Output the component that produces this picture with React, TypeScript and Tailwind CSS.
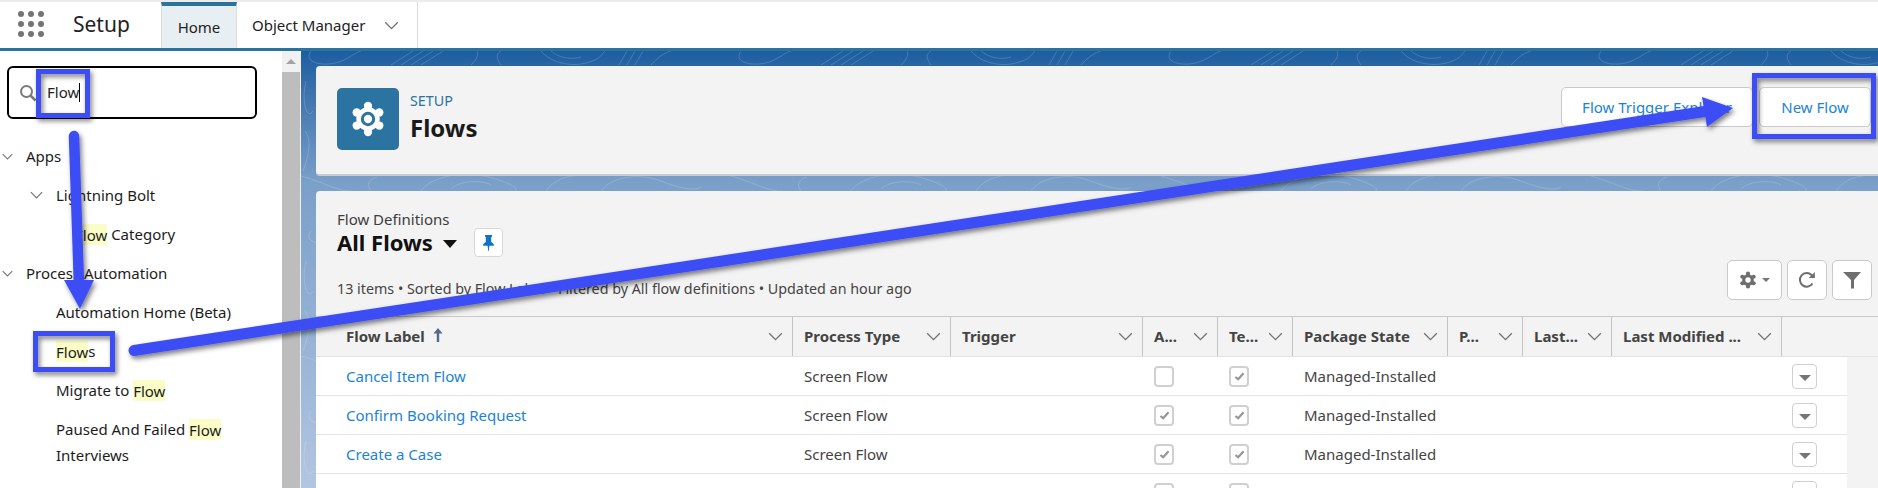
import { ReactNode } from "react"

const columns = [
  { label: "Flow Label", width: "w-[477px]", pad: "pl-[30px]" },
  { label: "Process Type", width: "w-[158px]", pad: "pl-[11px]" },
  { label: "Trigger", width: "w-[192px]", pad: "pl-[11px]" },
  { label: "A...", width: "w-[75px]", pad: "pl-[11px]" },
  { label: "Te...", width: "w-[75px]", pad: "pl-[11px]" },
  { label: "Package State", width: "w-[155px]", pad: "pl-[11px]" },
  { label: "P...", width: "w-[75px]", pad: "pl-[11px]" },
  { label: "Last...", width: "w-[89px]", pad: "pl-[11px]" },
  { label: "Last Modified ...", width: "w-[170px]", pad: "pl-[11px]" },
]

const rows = [
  { name: "Cancel Item Flow", type: "Screen Flow", trigger: "", active: false },
  { name: "Confirm Booking Request", type: "Screen Flow", trigger: "", active: true },
  { name: "Create a Case", type: "Screen Flow", trigger: "", active: true },
  { name: "Automated Reservation Check", type: "Autolaunched Flow", trigger: "Record—Run After Save", active: true },
]

function Chevron({ className = "" }: { className?: string }) {
  return (
    <svg viewBox="0 0 16 10" className={className} fill="none" stroke="#747474" strokeWidth="1.5">
      <path d="M1 1.5l7 7 7-7" />
    </svg>
  )
}

function Gear({ color, hole, ring }: { color: string; hole: string; ring?: string }) {
  const angles = [0, 60, 120, 180, 240, 300]
  return (
    <svg viewBox="0 0 40 40" className="w-full h-full">
      <circle cx="20" cy="20" r="13" fill={color} />
      {angles.map((a) => (
        <circle
          key={a}
          cx={20 + 14.5 * Math.sin((a * Math.PI) / 180)}
          cy={20 - 14.5 * Math.cos((a * Math.PI) / 180)}
          r="4.6"
          fill={color}
        />
      ))}
      {ring && <circle cx="20" cy="20" r="8" fill={ring} />}
      <circle cx="20" cy="20" r={ring ? 4.6 : 6} fill={hole} />
    </svg>
  )
}

function NavItem({ children, className = "" }: { children: ReactNode; className?: string }) {
  return <div className={`text-[15px] leading-[26px] text-[#1c1c1c] ${className}`}>{children}</div>
}

function Mark({ children }: { children: ReactNode }) {
  return <span className="bg-[#fbfdc6] py-[0.5px]">{children}</span>
}

function Check({ on }: { on: boolean }) {
  return (
    <div className="w-[20px] h-[21px] rounded-[4px] border-2 border-[#d0d0d0] bg-white flex items-center justify-center">
      {on && (
        <svg viewBox="0 0 12 10" className="w-[11px] h-[9px]" fill="none" stroke="#969696" strokeWidth="2.4">
          <path d="M1.5 5.5l3 2.6 6-6.6" />
        </svg>
      )}
    </div>
  )
}

function ToolButton({ children, className = "" }: { children: ReactNode; className?: string }) {
  return (
    <div className={`h-[40px] bg-white border border-[#c9c9c9] rounded-[5px] flex items-center justify-center ${className}`}>
      {children}
    </div>
  )
}

function Annotations() {
  return (
    <svg viewBox="0 0 1878 488" className="absolute inset-0 w-full h-full pointer-events-none">
      <defs>
        <filter id="arrowShadow" x="-5%" y="-20%" width="110%" height="140%">
          <feDropShadow dx="2" dy="3" stdDeviation="2.5" floodColor="#000" floodOpacity="0.5" />
        </filter>
      </defs>
      <g filter="url(#arrowShadow)" fill="none" stroke="#3e4ef6">
        <rect x="38.5" y="71.5" width="49" height="44" strokeWidth="5" />
        <rect x="35.5" y="333.5" width="77" height="36" strokeWidth="5" />
        <rect x="1754.5" y="75.5" width="119" height="61" strokeWidth="5" />
        <path d="M74 136L79 285" strokeWidth="10.5" strokeLinecap="round" />
        <path d="M64 280L94 280L80 309Z" fill="#3e4ef6" stroke="none" />
        <path d="M134 350.500L1708 111" strokeWidth="11" strokeLinecap="round" />
        <path d="M1702 97L1733 108L1707 127Z" fill="#3e4ef6" stroke="none" />
      </g>
    </svg>
  )
}

export default function App() {
  return (
    <div className="relative w-[1878px] h-[488px] overflow-hidden bg-white flex flex-col font-['Noto_Sans',sans-serif]">
      {/* top bar */}
      <div className="h-[51px] shrink-0 bg-white border-t-2 border-t-[#ececec] border-b-[3px] border-b-[#2a739f] flex">
        <div className="w-[161px] flex items-center">
          <div className="ml-[18px] mb-[2px] grid grid-cols-3 gap-x-[4px] gap-y-[4px]">
            {[0, 1, 2, 3, 4, 5, 6, 7, 8].map((d) => (
              <div key={d} className="w-[6px] h-[6px] rounded-full bg-[#747474]" />
            ))}
          </div>
          <span className="ml-[29px] text-[21px] text-[#222]">Setup</span>
        </div>
        <div className="w-[76px] bg-[#e8eff3] border-t-4 border-[#2a739f] border-x border-x-[#dcdcdc] flex items-center justify-center text-[15px] text-[#222]">
          Home
        </div>
        <div className="w-[181px] border-r border-[#dcdcdc] flex items-center text-[15px] text-[#222]">
          <span className="ml-[15px]">Object Manager</span>
          <Chevron className="w-[15px] h-[9px] ml-[19px]" />
        </div>
      </div>

      <div className="flex-1 flex min-h-0">
        {/* setup tree */}
        <div className="w-[282px] shrink-0 bg-white overflow-hidden">
          <div className="mt-[15px] ml-[7px] w-[250px] h-[53px] border-2 border-black rounded-[6px] flex items-center">
            <svg viewBox="0 0 18 18" className="ml-[10px] w-[18px] h-[18px]" fill="none" stroke="#7a7a7a" strokeWidth="2">
              <circle cx="7.500" cy="7.500" r="5.500" />
              <path d="M11.500 11.500L16.500 16.500" strokeWidth="2.500" />
            </svg>
            <span className="ml-[10px] text-[15px] text-[#222]">Flow</span>
            <div className="w-px h-[19px] bg-black" />
          </div>
          <div className="mt-[24px] flex items-center ml-[2px]">
            <Chevron className="w-[11px] h-[7px]" />
            <NavItem className="ml-[13px]">Apps</NavItem>
          </div>
          <div className="mt-[13px] flex items-center ml-[30px]">
            <Chevron className="w-[13px] h-[8px]" />
            <NavItem className="ml-[13px]">Lightning Bolt</NavItem>
          </div>
          <NavItem className="mt-[13px] ml-[75px]">
            <Mark>Flow</Mark> Category
          </NavItem>
          <div className="mt-[13px] flex items-center ml-[2px]">
            <Chevron className="w-[11px] h-[7px]" />
            <NavItem className="ml-[13px]">Process Automation</NavItem>
          </div>
          <NavItem className="mt-[13px] ml-[56px]">Automation Home (Beta)</NavItem>
          <NavItem className="mt-[13px] ml-[56px]">
            <Mark>Flow</Mark>s
          </NavItem>
          <NavItem className="mt-[13px] ml-[56px]">
            Migrate to <Mark>Flow</Mark>
          </NavItem>
          <NavItem className="mt-[13px] ml-[56px]">
            Paused And Failed <Mark>Flow</Mark>
            <br />
            Interviews
          </NavItem>
        </div>

        {/* scrollbar */}
        <div className="w-[18px] shrink-0 bg-[#bdbdbd] flex flex-col">
          <div className="h-[21px] bg-[#f1f1f1] flex items-center justify-center">
            <div className="w-0 h-0 border-x-[5px] border-x-transparent border-b-[5px] border-b-[#a3a3a3]" />
          </div>
        </div>
        <div className="w-[1px] shrink-0 bg-[#f0f0f0]" />

        {/* main */}
        <div className="relative flex-1 min-w-0 pl-[15px] pt-[15px] bg-gradient-to-b from-[#1b5e9f] via-[#7a9fc9] via-30% to-[#b2c6e1]">
          <svg className="absolute inset-0 w-full h-full">
            <defs>
              <pattern id="contours" width="430" height="180" patternUnits="userSpaceOnUse">
                <g fill="none" stroke="#ffffff" strokeOpacity="0.16" strokeWidth="1">
                  <path d="M10 0C4 8 12 14 28 13S52 2 60 0" />
                  <path d="M90 14L112 0M100 14L122 0M110 14L132 0M120 14L142 0" />
                  <path d="M170 14C176 8 178 4 176 0M200 14C194 6 196 2 200 0" />
                  <path d="M240 0C250 12 270 16 285 12S300 4 304 0M250 0C258 7 270 9 280 6" />
                  <path d="M318 14L326 0M326 14L334 0M334 14L342 0M350 14C356 8 360 3 370 0" />
                  <path d="M0 125C20 130 40 142 52 140M70 140C64 132 70 128 76 126" />
                  <path d="M120 140C130 125 165 118 195 128S215 142 208 140M150 138C160 128 185 130 190 134" />
                  <path d="M245 140C252 130 262 125 280 124M300 140C310 125 340 122 360 130S395 140 400 136" />
                  <path d="M5 30C0 50 6 70 12 60M4 80C12 90 6 110 2 120" />
                </g>
              </pattern>
            </defs>
            <rect width="100%" height="100%" fill="url(#contours)" />
          </svg>

          {/* page header */}
          <div className="relative h-[110px] bg-[#f3f3f3] rounded-l-[4px] border-b-2 border-[#c4ccd6] flex items-center justify-between pl-[21px] pr-[7px] pb-[2px]">
            <div className="flex items-center">
              <div className="w-[62px] h-[62px] rounded-[5px] bg-[#2b74a1] flex items-center justify-center">
                <div className="w-[36px] h-[36px]">
                  <Gear color="#ffffff" hole="#ffffff" ring="#2b74a1" />
                </div>
              </div>
              <div className="ml-[11px] pb-[1px]">
                <div className="text-[14.300px] leading-[18px] text-[#2b74a1]">SETUP</div>
                <div className="mt-[1px] text-[24px] leading-[34px] font-bold text-[#1a1a1a]">Flows</div>
              </div>
            </div>
            <div className="self-start mt-[21px] flex gap-[6px]">
              <div className="w-[192px] h-[40px] bg-white border border-[#c9c9c9] rounded-[5px] flex items-center justify-center text-[15px] text-[#1b83d6]">
                Flow Trigger Explorer
              </div>
              <div className="w-[112px] h-[40px] bg-white border border-[#c9c9c9] rounded-[5px] flex items-center justify-center text-[15px] text-[#1b83d6]">
                New Flow
              </div>
            </div>
          </div>

          {/* list view card */}
          <div className="relative mt-[15px] h-[400px] bg-[#f3f3f3] rounded-tl-[4px] overflow-hidden">
            <div className="pt-[20px] pl-[21px] pr-[6px]">
              <div className="text-[15px] leading-[17px] text-[#3d3d3d]">Flow Definitions</div>
              <div className="flex items-center h-[29px]">
                <span className="text-[22px] font-bold text-[#111]">All Flows</span>
                <div className="ml-[10px] mt-[2px] w-0 h-0 border-x-[7px] border-x-transparent border-t-[8px] border-t-[#111]" />
                <div className="ml-[17px] w-[29px] h-[29px] bg-white border border-[#d8d8d8] rounded-[4px] flex items-center justify-center">
                  <svg viewBox="0 0 12 18" className="w-[11px] h-[16px]" fill="#0e72c9">
                    <path d="M2 0h8v1.500L9 2.500v5l3 3v1.500H7L6.300 18h-.6L5 12H0v-1.500l3-3v-5L2 1.500z" />
                  </svg>
                </div>
              </div>
              <div className="mt-[3px] flex items-end justify-between h-[40px]">
                <div className="pb-[1px] text-[14.300px] leading-[20px] text-[#444]">
                  13 items • Sorted by Flow Label • Filtered by All flow definitions • Updated an hour ago
                </div>
                <div className="flex gap-[5px]">
                  <ToolButton className="w-[55px] gap-[5px]">
                    <div className="w-[18px] h-[18px]">
                      <Gear color="#6e6e6e" hole="#ffffff" />
                    </div>
                    <div className="w-0 h-0 border-x-[4px] border-x-transparent border-t-[4px] border-t-[#757575]" />
                  </ToolButton>
                  <ToolButton className="w-[40px]">
                    <svg viewBox="0 0 18 18" className="w-[18px] h-[18px]" fill="none" stroke="#6e6e6e" strokeWidth="2">
                      <path d="M14.500 12.500A6.800 6.800 0 1 1 13.500 4L16 6" />
                      <path d="M16.800 1v6h-6" fill="#6e6e6e" stroke="none" />
                    </svg>
                  </ToolButton>
                  <ToolButton className="w-[40px]">
                    <svg viewBox="0 0 18 18" className="w-[18px] h-[18px]" fill="#6e6e6e">
                      <path d="M0 1h18L11 9v8.500H8V9z" />
                    </svg>
                  </ToolButton>
                </div>
              </div>
            </div>

            {/* table */}
            <div className="mt-[16px] h-[41px] flex border-y border-t-[#c9c9c9] border-b-[#e3e3e3]">
              {columns.map((col, i) => (
                <div key={col.label} className={`${col.width} ${col.pad} shrink-0 border-r border-[#c4c4c4] flex items-center justify-between pr-[9px]`}>
                  <span className="flex items-center gap-[8px] text-[15px] font-bold text-[#444] whitespace-nowrap">
                    {col.label}
                    {i === 0 && (
                      <svg viewBox="0 0 10 14" className="w-[10px] h-[14px] -mt-[3px]" fill="#54698d">
                        <path d="M5 0L9.500 5.500H6.200V14H3.800V5.500H.5z" />
                      </svg>
                    )}
                  </span>
                  <Chevron className="w-[15px] h-[9px] shrink-0" />
                </div>
              ))}
            </div>
            {rows.map((row) => (
              <div key={row.name} className="w-[1531px] h-[39px] bg-white border-b border-[#e3e3e3] flex items-center text-[15px] text-[#444]">
                <div className="w-[477px] pl-[30px] text-[#1b83d6] shrink-0">{row.name}</div>
                <div className="w-[158px] pl-[11px] shrink-0">{row.type}</div>
                <div className="w-[192px] pl-[11px] shrink-0">{row.trigger}</div>
                <div className="w-[75px] pl-[11px] shrink-0">
                  <Check on={row.active} />
                </div>
                <div className="w-[75px] pl-[11px] shrink-0">
                  <Check on />
                </div>
                <div className="w-[155px] pl-[11px] shrink-0">Managed-Installed</div>
                <div className="w-[75px] shrink-0" />
                <div className="w-[89px] shrink-0" />
                <div className="w-[170px] shrink-0" />
                <div className="ml-[10px] w-[25px] h-[25px] border border-[#cfcfcf] rounded-[4px] flex items-center justify-center">
                  <div className="mt-[3px] w-0 h-0 border-x-[6px] border-x-transparent border-t-[6px] border-t-[#757575]" />
                </div>
              </div>
            ))}
          </div>
        </div>
      </div>

      <Annotations />
    </div>
  )
}
